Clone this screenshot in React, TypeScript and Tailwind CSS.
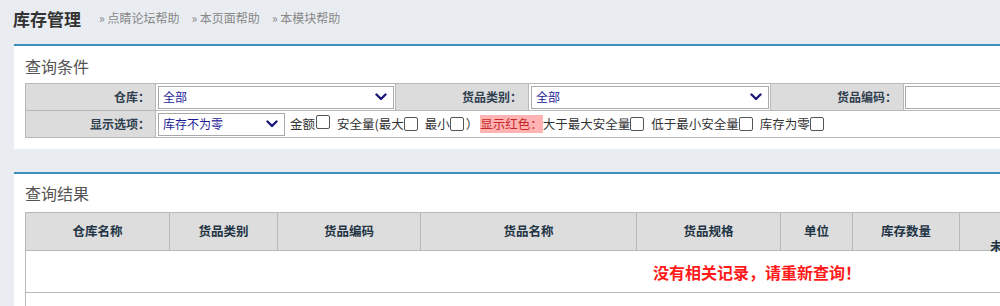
import React from "react";

const Chevron = () => (
  <svg width="12" height="8" viewBox="0 0 12 8" className="shrink-0">
    <polyline points="1.5,1.5 6,6 10.5,1.5" fill="none" stroke="#1a1a7a" strokeWidth="2.4" strokeLinecap="round" strokeLinejoin="round" />
  </svg>
);

const Box = () => (
  <span className="inline-block w-[14px] h-[14px] border border-[#555] rounded-[2px] bg-white shrink-0" />
);

const Select = ({ text, w }: { text: string; w: string }) => (
  <div className={`${w} h-[23px] border border-[#a9a9a9] bg-white flex items-center justify-between pl-[4px] pr-[6px]`}>
    <span className="text-[12px] text-[#1c1c9a]">{text}</span>
    <Chevron />
  </div>
);

export default function App() {
  const headers: [string, string][] = [
    ["仓库名称", "w-[144px]"],
    ["货品类别", "w-[108px]"],
    ["货品编码", "w-[143px]"],
    ["货品名称", "w-[216px]"],
    ["货品规格", "w-[144px]"],
    ["单位", "w-[72px]"],
    ["库存数量", "w-[107px]"],
  ];
  return (
    <div className="w-[1000px] h-[306px] overflow-hidden bg-[#e9edf1] font-['Noto_Sans_CJK_SC','Microsoft_YaHei',sans-serif] text-[#333]">
      <div className="h-[44px] flex items-center pl-[13px] pb-[8px]">
        <span className="text-[17px] font-bold text-[#333] leading-none">库存管理</span>
        <span className="ml-[18px] text-[12px] text-[#888] leading-none">» 点睛论坛帮助</span>
        <span className="ml-[12px] text-[12px] text-[#888] leading-none">» 本页面帮助</span>
        <span className="ml-[12px] text-[12px] text-[#888] leading-none">» 本模块帮助</span>
      </div>

      <div className="ml-[14px] w-[1500px] h-[105px] bg-white border-t-2 border-[#3f8dbb] pl-[11px]">
        <div className="h-[37px] flex items-center pt-[3px] text-[16px] text-[#555]">查询条件</div>
        <table className="border-collapse w-[1480px] table-fixed">
          <tbody>
            <tr className="h-[27px]">
              <td className="w-[130px] border border-[#b8b8b8] bg-[#dcdcdc] text-right pr-[5px] text-[12px] font-bold text-[#2f3f4f]">仓库：</td>
              <td className="w-[240px] border border-[#b8b8b8] px-[2px]"><Select text="全部" w="w-[236px]" /></td>
              <td className="w-[133px] border border-[#b8b8b8] bg-[#dcdcdc] text-right pr-[6px] text-[12px] font-bold text-[#2f3f4f]">货品类别：</td>
              <td className="w-[242px] border border-[#b8b8b8] px-[2px]"><Select text="全部" w="w-[238px]" /></td>
              <td className="w-[133px] border border-[#b8b8b8] bg-[#dcdcdc] text-right pr-[6px] text-[12px] font-bold text-[#2f3f4f]">货品编码：</td>
              <td className="border border-[#b8b8b8] pl-[1px]"><div className="w-[300px] h-[23px] border border-[#a9a9a9] bg-white" /></td>
            </tr>
            <tr className="h-[27px]">
              <td className="border border-[#b8b8b8] bg-[#dcdcdc] text-right pr-[5px] text-[12px] font-bold text-[#2f3f4f]">显示选项：</td>
              <td colSpan={5} className="border border-[#b8b8b8] pl-[2px]">
                <div className="flex items-center text-[12.5px] text-[#333] whitespace-nowrap">
                  <Select text="库存不为零" w="w-[127px]" />
                  <span className="ml-[5px]">金额</span>
                  <span className="ml-[1px]"><Box /></span>
                  <span className="ml-[7px]">安全量(最大</span>
                  <Box />
                  <span className="ml-[7px]">最小</span>
                  <Box />
                  <span className="ml-[2px]">）</span>
                  <span className="ml-[2px] bg-[#ffb3b3] text-[#c62828]">显示红色：</span>
                  <span>大于最大安全量</span>
                  <Box />
                  <span className="ml-[7px]">低于最小安全量</span>
                  <Box />
                  <span className="ml-[7px]">库存为零</span>
                  <Box />
                </div>
              </td>
            </tr>
          </tbody>
        </table>
      </div>

      <div className="h-[23px]" />

      <div className="ml-[14px] w-[1500px] h-[200px] bg-white border-t-2 border-[#3f8dbb] pl-[11px]">
        <div className="h-[38px] flex items-center text-[16px] text-[#555]">查询结果</div>
        <table className="border-collapse w-[1464px] table-fixed">
          <thead>
            <tr className="h-[38px] bg-[#dddddd]">
              {headers.map(([h, w]) => (
                <th key={h} className={`${w} border border-[#b8b8b8] text-[12.5px] font-bold text-[#1f3445] text-center`}>{h}</th>
              ))}
              <th className="border border-[#b8b8b8] text-[12.5px] font-bold text-[#1f3445] text-left align-top p-0">
                <div className="h-[30px] pt-[26px] pl-[30px] leading-[14px] whitespace-nowrap">未审核数量</div>
              </th>
            </tr>
          </thead>
          <tbody>
            <tr className="h-[42px]">
              <td colSpan={8} className="border border-[#b8b8b8] text-center text-[16px] font-bold text-[#ff1a1a]">没有相关记录，请重新查询！</td>
            </tr>
            <tr className="h-[30px]">
              <td colSpan={8} className="border border-[#b8b8b8]"></td>
            </tr>
          </tbody>
        </table>
      </div>
    </div>
  );
}
